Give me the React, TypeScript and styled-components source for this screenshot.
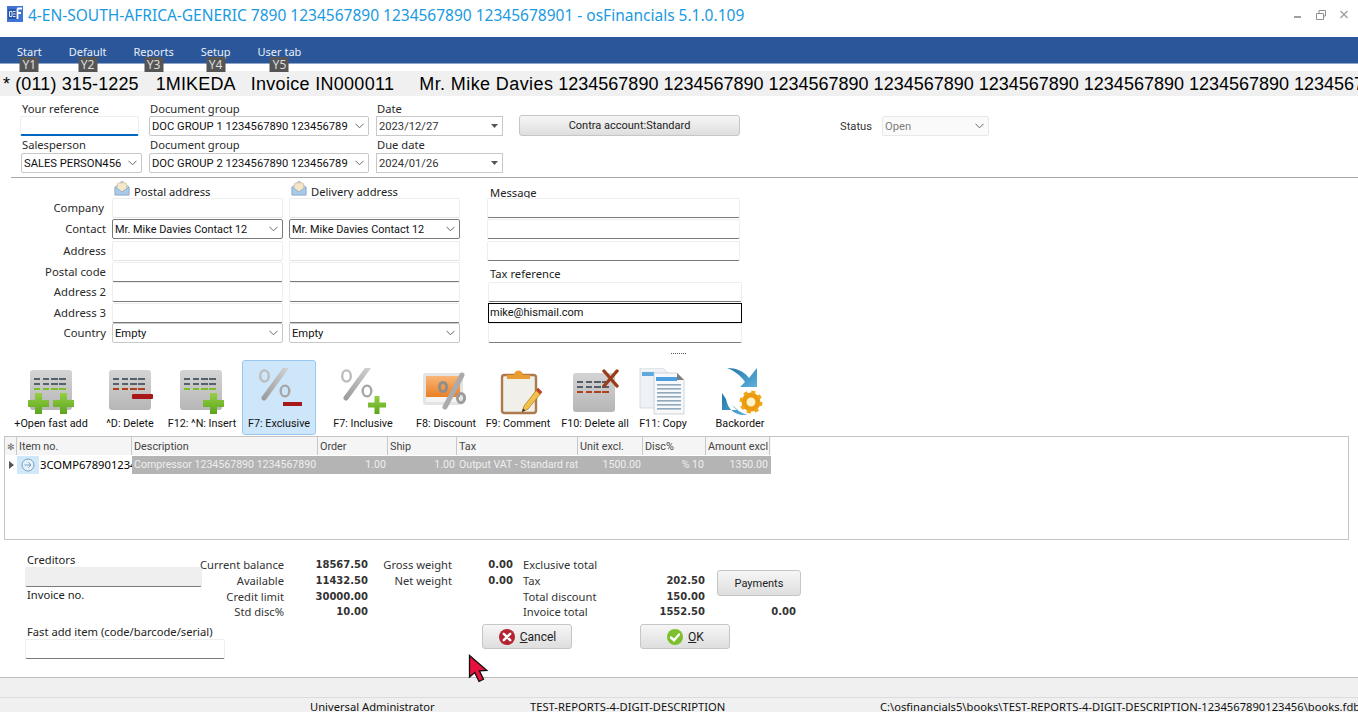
import React from "react";
import styled, { createGlobalStyle } from "styled-components";

const GlobalStyle = createGlobalStyle`
  html, body {
    margin: 0;
    padding: 0;
    background: #fff;
    overflow: hidden;
  }
  * { box-sizing: border-box; }
`;

const uiFont = `"Noto Sans", "Open Sans", sans-serif`;
const valueFont = `Roboto, "Noto Sans", sans-serif`;

const Page = styled.div`
  position: relative;
  width: 1358px;
  height: 712px;
  overflow: hidden;
  display: flex;
  flex-direction: column;
  font-family: ${uiFont};
  font-size: 12px;
  color: #222;
  background: #fff;
`;

const TitleBar = styled.div`
  height: 37px;
  flex: none;
  display: flex;
  align-items: flex-start;
  padding: 6px 10px 0 7px;
`;

const AppTitle = styled.div`
  margin-left: 5px;
  font-size: 15.5px;
  line-height: 18px;
  color: #1b9ae0;
  white-space: nowrap;
  flex: 1;
`;

const WindowButtons = styled.div`
  display: flex;
  align-items: center;
  gap: 14px;
  padding-top: 4px;
`;

const Ribbon = styled.div`
  height: 27px;
  flex: none;
  display: flex;
  gap: 27px;
  padding-left: 17px;
  background: #2b579a;
  border-bottom: 1px solid #8ea5c8;
`;

const Tab = styled.div`
  position: relative;
  color: #e9eef6;
  font-size: 11px;
  line-height: 30px;
  white-space: nowrap;
`;

const KeyTip = styled.span`
  position: absolute;
  top: 20px;
  left: 50%;
  transform: translateX(-50%);
  width: 19px;
  height: 15px;
  background: #555;
  color: #ddd;
  font-size: 12px;
  line-height: 15px;
  text-align: center;
`;

const InfoBand = styled.div`
  margin-top: 7px;
  height: 25px;
  flex: none;
  display: flex;
  background: #f0f0f0;
  font-family: "Liberation Sans", Arial, sans-serif;
  font-size: 18px;
  line-height: 26px;
  color: #000;
  white-space: pre;
  overflow: hidden;
  padding-left: 3px;
`;

const BandPart = styled.span<{ $gap?: number; $spacing?: number }>`
  flex: none;
  margin-left: ${(p) => p.$gap || 0}px;
  letter-spacing: ${(p) => p.$spacing || 0}px;
`;

const TopForm = styled.div`
  flex: none;
  display: grid;
  grid-template-columns: 121px 220px 127px 230px 1fr;
  grid-template-rows: 14px 20px 17px 19px;
  column-gap: 7px;
  padding: 6px 0 0 21px;
  height: 76px;
`;

const FieldLabel = styled.div<{ $lift?: boolean }>`
  padding-left: 1px;
  margin-bottom: ${(p) => (p.$lift ? "1px" : "0")};
  font-size: 11.2px;
  line-height: 14px;
  color: #2a2a2a;
  white-space: nowrap;
  align-self: end;
`;

const Field = styled.div<{ $flat?: boolean }>`
  height: 20px;
  background: #fff;
  border: 1px solid #eee;
  border-bottom: 1px solid ${(p) => (p.$flat ? "#e2e2e2" : "#7a7a7a")};
  border-radius: 2px;
`;

const ReferenceField = styled(Field)`
  width: 119px;
  margin-left: -1px;
  border-bottom: 2px solid #0067c0;
`;

const GreyField = styled(Field)`
  background: #efefef;
`;

const Combo = styled.div<{ $tone?: "dark" | "muted" }>`
  height: 20px;
  display: flex;
  align-items: center;
  background: ${(p) => (p.$tone === "muted" ? "#fafafa" : "#fff")};
  border: 1px solid ${(p) => (p.$tone === "dark" ? "#7a7a7a" : p.$tone === "muted" ? "#e8e8e8" : "#c8c8c8")};
  border-radius: 2px;
  padding: 0 4px 0 2px;
  font-family: ${valueFont};
  font-size: ${(p) => (p.$tone === "dark" ? "10.9px" : "11.2px")};
  color: ${(p) => (p.$tone === "muted" ? "#7d7d7d" : "#111")};
`;

const ComboText = styled.span`
  flex: 1;
  min-width: 0;
  margin-right: 7px;
  overflow: hidden;
  white-space: nowrap;
`;

const DateBox = styled(Combo)`
  border-radius: 0;
  padding-right: 4px;
  color: #333;
`;

const PushButton = styled.div`
  display: flex;
  align-items: center;
  justify-content: center;
  gap: 4px;
  border: 1px solid #c6c6c6;
  border-radius: 3px;
  background: linear-gradient(#f6f6f6, #dedede);
  font-family: ${valueFont};
  font-size: 11px;
  color: #222;
`;

const ContraButton = styled(PushButton)`
  margin-left: 9px;
  height: 21px;
  margin-top: -1px;
`;

const StatusWrap = styled.div`
  display: flex;
  align-items: center;
  padding-left: 93px;
`;

const StatusText = styled.span`
  flex: none;
  width: 42px;
  font-family: ${valueFont};
  font-size: 11.2px;
  color: #333;
`;

const StatusCombo = styled(Combo)`
  width: 107px;
  flex: none;
`;

const Divider = styled.div`
  flex: none;
  margin: 5px 0 0 11px;
  height: 1px;
  background: #a8a8a8;
`;

const AddressGrid = styled.div`
  flex: none;
  display: grid;
  grid-template-columns: 95px 171px 171px 276px;
  grid-template-rows: 20px 21px 22px 21px 20px 21px 20px 21px;
  column-gap: 6px;
  margin-left: 11px;
  height: 166px;
`;

const AddressHead = styled.div`
  display: flex;
  align-items: flex-end;
  gap: 4px;
  padding-left: 2px;
  font-size: 11.2px;
  line-height: 14px;
  white-space: nowrap;
  overflow: hidden;
`;

const EnvelopeSlot = styled.span`
  align-self: flex-start;
  margin-top: 2px;
  height: 16px;
`;

const HeadText = styled.span`
  margin-bottom: -1px;
`;

const RowLabel = styled.div<{ $inset?: number }>`
  padding-right: ${(p) => p.$inset || 0}px;
  text-align: right;
  font-size: 11.3px;
  line-height: 19px;
  color: #2a2a2a;
  white-space: nowrap;
`;

const MessageHead = styled.div`
  margin-left: 24px;
  align-self: end;
  font-size: 11.2px;
  line-height: 14px;
  margin-bottom: -2px;
`;

const MessageField = styled(Field)`
  margin: 0 2px 0 21px;
`;

const TaxLabel = styled(MessageHead)`
  margin-bottom: 0;
  padding-bottom: 1px;
`;

const TaxField = styled(Field)`
  margin: 0 0 0 22px;
`;

const EmailField = styled(TaxField)`
  border: 1px solid #000;
  border-radius: 0;
  padding-left: 1px;
  font-family: ${valueFont};
  font-size: 11px;
  line-height: 17px;
  color: #111;
`;

const SashRow = styled.div`
  flex: none;
  height: 16px;
  padding: 9px 0 0 671px;
`;

const SashDots = styled.div`
  width: 15px;
  border-top: 1px dotted #555;
`;

const Toolbar = styled.div`
  flex: none;
  height: 75px;
  display: flex;
  padding-left: 14px;
`;

const ToolButton = styled.div<{ $width: number; $offset?: number; $active?: boolean }>`
  width: ${(p) => p.$width}px;
  margin-left: ${(p) => p.$offset || 0}px;
  display: flex;
  flex-direction: column;
  align-items: center;
  padding-top: 7px;
  border: 1px solid ${(p) => (p.$active ? "#98c8f0" : "transparent")};
  border-radius: 3px;
  background: ${(p) => (p.$active ? "#cde6f9" : "transparent")};
  font-family: ${valueFont};
  font-size: 10.8px;
  line-height: 14px;
  white-space: nowrap;
  color: #111;
`;

const ToolIcon = styled.svg`
  width: 48px;
  height: 48px;
  flex: none;
  margin-bottom: 1px;
`;

const GridBox = styled.div`
  flex: none;
  margin: 1px 9px 0 4px;
  height: 104px;
  border: 1px solid #c4c4c4;
  overflow: hidden;
`;

const columns = "12px 115px 186px 70px 69px 121px 65px 63px 64px";

const GridHeader = styled.div`
  display: grid;
  grid-template-columns: ${columns};
  width: 766px;
  height: 18px;
  background: #f5f5f5;
`;

const HeadCell = styled.div`
  padding-left: 2px;
  border-right: 1px solid #c8c8c8;
  font-family: ${valueFont};
  font-size: 10.8px;
  line-height: 20px;
  color: #444;
  overflow: hidden;
  white-space: nowrap;
`;

const CornerCell = styled(HeadCell)`
  padding: 0;
  text-align: center;
  font-size: 9px;
  color: #666;
`;

const GridRow = styled.div`
  display: grid;
  grid-template-columns: ${columns};
  width: 766px;
  height: 18px;
  margin-top: 1px;
  background: #b4b4b4;
`;

const Cell = styled.div<{ $right?: boolean }>`
  padding: 0 ${(p) => (p.$right ? "2px" : "0")} 0 ${(p) => (p.$right ? "0" : "2px")};
  text-align: ${(p) => (p.$right ? "right" : "left")};
  font-family: ${valueFont};
  font-size: 10.6px;
  line-height: 18px;
  color: #efefef;
  overflow: hidden;
  white-space: nowrap;
`;

const RowMarker = styled.div`
  background: #fff;
  display: flex;
  align-items: center;
  justify-content: center;
`;

const MarkerArrow = styled.span`
  width: 0;
  height: 0;
  border-left: 5px solid #555;
  border-top: 4px solid transparent;
  border-bottom: 4px solid transparent;
`;

const ItemCell = styled.div`
  display: flex;
  background: #fff;
  overflow: hidden;
`;

const ItemIconWrap = styled.span`
  flex: none;
  width: 22px;
  display: flex;
  align-items: center;
  justify-content: center;
  background: #cfe9fb;
`;

const ItemCode = styled.span`
  padding-left: 1px;
  font-size: 11.2px;
  line-height: 18px;
  color: #000;
  white-space: nowrap;
`;

const BottomArea = styled.div`
  flex: 1;
  min-height: 0;
  display: flex;
`;

const LeftPane = styled.div`
  flex: none;
  width: 200px;
  padding: 13px 0 0 25px;
  display: flex;
  flex-direction: column;
`;

const PaneLabel = styled.div`
  padding-left: 2px;
  font-size: 11.2px;
  line-height: 14px;
  white-space: nowrap;
`;

const CreditorBox = styled(GreyField)`
  width: 177px;
  flex: none;
`;

const InvoiceLabel = styled(PaneLabel)`
  margin-top: 1px;
`;

const FastLabel = styled(PaneLabel)`
  margin-top: 23px;
`;

const FastBox = styled(Field)`
  width: 200px;
  flex: none;
`;

const RightPane = styled.div`
  flex: none;
  padding-top: 17px;
`;

const Totals = styled.div`
  display: grid;
  grid-template-columns: 84px 84px 84px 61px 10px 182px 91px;
  grid-template-rows: 16px 16px 16px 14px;
  align-items: center;
`;

const TotalLabel = styled.div<{ $left?: boolean }>`
  text-align: ${(p) => (p.$left ? "left" : "right")};
  font-size: 11.2px;
  line-height: 16px;
  white-space: nowrap;
  color: #333;
`;

const TotalValue = styled.div`
  text-align: right;
  font-family: "DejaVu Sans", Verdana, sans-serif;
  font-size: 10px;
  font-weight: 700;
  line-height: 16px;
  color: #333;
`;

const Spacer = styled.div``;

const SplitRow = styled.div`
  display: flex;
  justify-content: space-between;
  align-items: center;
`;

const PaymentsButton = styled(PushButton)`
  grid-column: 7;
  grid-row: 1 / 4;
  height: 26px;
  width: 84px;
  margin: 13px 0 0 12px;
  align-self: start;
`;

const GrandExtra = styled(TotalValue)`
  grid-column: 7;
  grid-row: 4;
`;

const ActionRow = styled.div`
  display: flex;
  gap: 68px;
  margin: 5px 0 0 282px;
`;

const ActionButton = styled(PushButton)`
  width: 90px;
  height: 25px;
  font-size: 12px;
`;

const StatusBar = styled.div`
  flex: none;
  height: 35px;
  background: #f0f0f0;
  border-top: 1px solid #bcbcbc;
`;

const StatusLine = styled.div`
  margin-top: 19px;
  height: 15px;
  border-top: 1px solid #dcdcdc;
  display: flex;
  font-size: 11.2px;
  line-height: 18px;
  color: #111;
  white-space: nowrap;
  overflow: hidden;
`;

const StatusPanel = styled.div<{ $left: number; $width?: number }>`
  flex: none;
  margin-left: ${(p) => p.$left}px;
  width: ${(p) => (p.$width ? `${p.$width}px` : "auto")};
  overflow: hidden;
`;

const Cursor = styled.svg`
  position: absolute;
  left: 468px;
  top: 654px;
  width: 21px;
  height: 29px;
`;

const Chevron = () => (
  <svg width="9" height="6" viewBox="0 0 9 6" style={{ flex: "none" }}>
    <path d="M0.5 0.8 L4.5 4.8 L8.5 0.8" fill="none" stroke="#666" strokeWidth="1" />
  </svg>
);

const Caret = () => (
  <svg width="7" height="4" viewBox="0 0 7 4" style={{ flex: "none" }}>
    <path d="M0 0 H7 L3.5 4 Z" fill="#555" />
  </svg>
);

const AppLogo = () => (
  <svg width="16" height="16" viewBox="0 0 16 16" style={{ flex: "none" }}>
    <rect width="16" height="16" fill="#3f73d6" />
    <rect x="1" y="3" width="9" height="10" fill="#2c56a8" />
    <path d="M2.5 5.5 H5 V10.5 H2.5 Z M6 5.5 H8.5 M6 8 H8.5 M6 10.5 H8.5" fill="none" stroke="#dfe8fa" strokeWidth="1" />
    <path d="M10.5 2.5 H15 M10.5 2.5 V13 M10.5 7 H14" fill="none" stroke="#fff" strokeWidth="1.8" />
  </svg>
);

const Envelope = () => (
  <svg width="16" height="16" viewBox="0 0 16 16">
    <path d="M1 7 L8 1 L15 7 V15 H1 Z" fill="#c4d9ee" stroke="#8eaac8" strokeWidth="0.7" />
    <path d="M3.5 3 H12.5 V9 L8 12 L3.5 9 Z" fill="#f4e6c8" stroke="#d8b98c" strokeWidth="0.5" />
    <path d="M1 7 L8 12 L15 7 V15 H1 Z" fill="#a9cbe9" stroke="#7f9fc4" strokeWidth="0.6" />
  </svg>
);

const Defs = () => (
  <svg width="0" height="0" style={{ position: "absolute" }}>
    <defs>
      <linearGradient id="card" x1="0" y1="0" x2="0" y2="1">
        <stop offset="0" stopColor="#d4d4d4" />
        <stop offset="1" stopColor="#b6b6b6" />
      </linearGradient>
      <linearGradient id="green" x1="0" y1="0" x2="0" y2="1">
        <stop offset="0" stopColor="#96cf45" />
        <stop offset="1" stopColor="#5aa51c" />
      </linearGradient>
      <linearGradient id="slash" x1="1" y1="0" x2="0" y2="1">
        <stop offset="0" stopColor="#cfcfcf" />
        <stop offset="1" stopColor="#9d9d9d" />
      </linearGradient>
      <linearGradient id="orange" x1="0" y1="0" x2="0" y2="1">
        <stop offset="0" stopColor="#f8b678" />
        <stop offset="1" stopColor="#ea7f22" />
      </linearGradient>
      <linearGradient id="blueArrow" x1="0" y1="0" x2="1" y2="1">
        <stop offset="0" stopColor="#1f76a8" />
        <stop offset="1" stopColor="#5fb0dc" />
      </linearGradient>
    </defs>
  </svg>
);

const CardBase = ({ x = 3, y = 2, h = 40, low = "#7cbf2a" }: { x?: number; y?: number; h?: number; low?: string }) => (
  <g>
    <rect x={x} y={y} width="42" height={h} rx="3" fill="url(#card)" />
    {[8, 13, 18].map((dy, i) => (
      <g key={dy} fill={i === 2 ? low : "#566068"}>
        <rect x={x + 4} y={y + dy} width="6" height="2" />
        <rect x={x + 13} y={y + dy} width="6" height="2" />
        <rect x={x + 21} y={y + dy} width="7" height="2" />
        <rect x={x + 29} y={y + dy} width="7" height="2" />
      </g>
    ))}
  </g>
);

const Plus = ({ x, y, size = 21, bar = 7 }: { x: number; y: number; size?: number; bar?: number }) => {
  const arm = (size - bar) / 2;
  return (
    <path
      d={`M${x + arm} ${y} h${bar} v${arm} h${arm} v${bar} h-${arm} v${arm} h-${bar} v-${arm} h-${arm} v-${bar} h${arm} Z`}
      fill="url(#green)"
    />
  );
};

const Percent = ({ dx = 0 }: { dx?: number }) => (
  <g transform={`translate(${dx} 0)`}>
    <ellipse cx="8.5" cy="8" rx="4.3" ry="5.6" fill="none" stroke="#bdbdbd" strokeWidth="2.4" />
    <path d="M30 0 L8 30" stroke="url(#slash)" strokeWidth="5" strokeLinecap="round" />
    <ellipse cx="29" cy="23" rx="4.3" ry="5.4" fill="none" stroke="#a6a6a6" strokeWidth="2.4" />
  </g>
);

const iconArt: Record<string, React.ReactNode> = {
  fastAdd: (
    <>
      <CardBase />
      <Plus x={1} y={25} />
      <Plus x={26} y={25} />
    </>
  ),
  remove: (
    <>
      <CardBase low="#b0401c" />
      <rect x="26" y="26" width="21" height="5" rx="1" fill="#a81818" />
    </>
  ),
  insert: (
    <>
      <CardBase x={2} />
      <Plus x={25} y={25} />
    </>
  ),
  exclusive: (
    <>
      <Percent dx={1} />
      <rect x="28" y="34" width="19" height="4" fill="#a81818" />
    </>
  ),
  inclusive: (
    <>
      <Percent dx={-1} />
      <Plus x={29} y={28} size={18} bar={5} />
    </>
  ),
  discount: (
    <>
      <rect x="1" y="5" width="40" height="32" rx="3" fill="#e4e4e4" />
      <rect x="4" y="8" width="34" height="21" fill="url(#orange)" />
      <rect x="4" y="29" width="34" height="5" fill="#f4f4f4" />
      <ellipse cx="21" cy="19" rx="3.6" ry="4.6" fill="none" stroke="#8e8e8e" strokeWidth="3" />
      <path d="M40 7 L23 39" stroke="#ababab" strokeWidth="5" strokeLinecap="round" />
      <ellipse cx="39" cy="30" rx="3.6" ry="4.6" fill="none" stroke="#9d9d9d" strokeWidth="3" />
    </>
  ),
  comment: (
    <>
      <rect x="8" y="7" width="34" height="38" rx="2.5" fill="#f1efe9" stroke="#ac7a4c" strokeWidth="2.4" />
      <path d="M13 11 V7 H20 C20 1 29 1 29 7 H36 V11 Z" fill="#e99c32" />
      <path d="M44 20 L30 38 L28 44 L34 41 L48 24 Z" fill="#f2c14a" stroke="#a9792a" strokeWidth="0.7" />
      <path d="M44 20 L48 24 L46 26.5 L42 22.5 Z" fill="#c8402a" />
      <path d="M28 44 L29 40.5 L31.5 42.5 Z" fill="#333" />
    </>
  ),
  deleteAll: (
    <>
      <CardBase x={2} y={5} h={39} low="#b0401c" />
      <path d="M33 3 L46 18 M46 3 L33 18" stroke="#9a3c1a" strokeWidth="3.4" strokeLinecap="round" />
    </>
  ),
  copy: (
    <>
      <path d="M1 0 H24 L30 6 V40 H1 Z" fill="#eef1f5" stroke="#cfd4da" strokeWidth="0.8" />
      <rect x="3" y="4" width="12" height="4" fill="#5fa8dd" />
      <path d="M15 5 H38 L45 12 V46 H15 Z" fill="#f6f8fa" stroke="#c4cad0" strokeWidth="0.8" />
      <path d="M38 5 L45 12 H38 Z" fill="#7d7d7d" />
      <rect x="17" y="9" width="21" height="4" fill="#4d9fe0" />
      {[16, 20, 24, 28, 32, 36, 40].map((y) => (
        <rect key={y} x="18" y={y} width="24" height="1.6" fill="#8fa9bd" />
      ))}
    </>
  ),
  backorder: (
    <>
      <path d="M11 0 C20 0 28 3 33 10 L41 0 V19 H24 L29 14 C25 8 19 3 11 0 Z" fill="url(#blueArrow)" />
      <path d="M6 25 V42 H22 L16 37 C19 41 25 45 32 47 C21 48 12 43 10 31 Z" fill="url(#blueArrow)" />
      <circle cx="35" cy="34" r="7" fill="#fff3c8" stroke="#eb9a12" strokeWidth="5" />
      <circle cx="35" cy="34" r="10" fill="none" stroke="#f0a818" strokeWidth="3" strokeDasharray="4 3.85" />
    </>
  ),
};

const tools = [
  { key: "fastAdd", label: "+Open fast add", width: 74 },
  { key: "remove", label: "^D: Delete", width: 64, offset: 10 },
  { key: "insert", label: "F12: ^N: Insert", width: 80 },
  { key: "exclusive", label: "F7: Exclusive", width: 74, active: true },
  { key: "inclusive", label: "F7: Inclusive", width: 94 },
  { key: "discount", label: "F8: Discount", width: 72 },
  { key: "comment", label: "F9: Comment", width: 72 },
  { key: "deleteAll", label: "F10: Delete all", width: 82 },
  { key: "copy", label: "F11: Copy", width: 54 },
  { key: "backorder", label: "Backorder", width: 100 },
];

const ribbonTabs = [
  ["Start", "Y1"],
  ["Default", "Y2"],
  ["Reports", "Y3"],
  ["Setup", "Y4"],
  ["User tab", "Y5"],
];

const gridHeads = ["Item no.", "Description", "Order", "Ship", "Tax", "Unit excl.", "Disc%", "Amount excl"];

const contact = "Mr. Mike Davies Contact 12";

function TotalsSplit({ label, value }: { label: string; value: string }) {
  return (
    <SplitRow>
      <TotalLabel $left>{label}</TotalLabel>
      <TotalValue>{value}</TotalValue>
    </SplitRow>
  );
}

export default function App() {
  return (
    <Page>
      <GlobalStyle />
      <Defs />
      <TitleBar>
        <AppLogo />
        <AppTitle>4-EN-SOUTH-AFRICA-GENERIC 7890 1234567890 1234567890 12345678901 - osFinancials 5.1.0.109</AppTitle>
        <WindowButtons>
          <svg width="54" height="10" viewBox="0 0 54 10">
            <rect x="0" y="6" width="7" height="2" fill="#a0a0a0" />
            <path d="M22.5 3.5 H29.5 V9.5 H22.5 Z M25 3 V0.5 H31.5 V6 H30" fill="none" stroke="#8f8f8f" />
            <path d="M46.5 1 L53.5 8 M53.5 1 L46.5 8" stroke="#a0a0a0" strokeWidth="1.4" />
          </svg>
        </WindowButtons>
      </TitleBar>

      <Ribbon>
        {ribbonTabs.map(([name, tip]) => (
          <Tab key={name}>
            {name}
            <KeyTip>{tip}</KeyTip>
          </Tab>
        ))}
      </Ribbon>

      <InfoBand>
        <BandPart $spacing={0.12}>* (011) 315-1225</BandPart>
        <BandPart $gap={17} $spacing={0.14}>1MIKEDA</BandPart>
        <BandPart $gap={15} $spacing={0.3}>Invoice IN000011</BandPart>
        <BandPart $gap={25} $spacing={0.4}>Mr. Mike Davies</BandPart>
        <BandPart $gap={5}>1234567890 1234567890 1234567890 1234567890 1234567890 1234567890 1234567890 1234567890</BandPart>
      </InfoBand>

      <TopForm>
        <FieldLabel>Your reference</FieldLabel>
        <FieldLabel>Document group</FieldLabel>
        <FieldLabel>Date</FieldLabel>
        <div />
        <div />

        <ReferenceField />
        <Combo>
          <ComboText>DOC GROUP 1 1234567890 1234567890</ComboText>
          <Chevron />
        </Combo>
        <DateBox>
          <ComboText>2023/12/27</ComboText>
          <Caret />
        </DateBox>
        <ContraButton>Contra account:Standard</ContraButton>
        <StatusWrap>
          <StatusText>Status</StatusText>
          <StatusCombo $tone="muted">
            <ComboText>Open</ComboText>
            <Chevron />
          </StatusCombo>
        </StatusWrap>

        <FieldLabel $lift>Salesperson</FieldLabel>
        <FieldLabel $lift>Document group</FieldLabel>
        <FieldLabel $lift>Due date</FieldLabel>
        <div />
        <div />

        <Combo>
          <ComboText>SALES PERSON4567890</ComboText>
          <Chevron />
        </Combo>
        <Combo>
          <ComboText>DOC GROUP 2 1234567890 1234567890</ComboText>
          <Chevron />
        </Combo>
        <DateBox>
          <ComboText>2024/01/26</ComboText>
          <Caret />
        </DateBox>
      </TopForm>

      <Divider />

      <AddressGrid>
        <div />
        <AddressHead>
          <EnvelopeSlot>
            <Envelope />
          </EnvelopeSlot>
          <HeadText>Postal address</HeadText>
        </AddressHead>
        <AddressHead>
          <EnvelopeSlot>
            <Envelope />
          </EnvelopeSlot>
          <HeadText>Delivery address</HeadText>
        </AddressHead>
        <MessageHead>Message</MessageHead>

        <RowLabel $inset={2}>Company</RowLabel>
        <Field $flat />
        <Field $flat />
        <MessageField />

        <RowLabel>Contact</RowLabel>
        <Combo $tone="dark">
          <ComboText>{contact}</ComboText>
          <Chevron />
        </Combo>
        <Combo $tone="dark">
          <ComboText>{contact}</ComboText>
          <Chevron />
        </Combo>
        <MessageField />

        <RowLabel>Address</RowLabel>
        <Field $flat />
        <Field $flat />
        <MessageField />

        <RowLabel>Postal code</RowLabel>
        <Field />
        <Field />
        <TaxLabel>Tax reference</TaxLabel>

        <RowLabel>Address 2</RowLabel>
        <Field />
        <Field />
        <TaxField />

        <RowLabel>Address 3</RowLabel>
        <Field />
        <Field />
        <EmailField>mike@hismail.com</EmailField>

        <RowLabel>Country</RowLabel>
        <Combo>
          <ComboText>Empty</ComboText>
          <Chevron />
        </Combo>
        <Combo>
          <ComboText>Empty</ComboText>
          <Chevron />
        </Combo>
        <TaxField />
      </AddressGrid>

      <SashRow>
        <SashDots />
      </SashRow>

      <Toolbar>
        {tools.map((t) => (
          <ToolButton key={t.key} $width={t.width} $offset={t.offset} $active={t.active}>
            <ToolIcon viewBox="0 0 48 48">{iconArt[t.key]}</ToolIcon>
            {t.label}
          </ToolButton>
        ))}
      </Toolbar>

      <GridBox>
        <GridHeader>
          <CornerCell>✻</CornerCell>
          {gridHeads.map((h) => (
            <HeadCell key={h}>{h}</HeadCell>
          ))}
        </GridHeader>
        <GridRow>
          <RowMarker>
            <MarkerArrow />
          </RowMarker>
          <ItemCell>
            <ItemIconWrap>
              <svg width="14" height="14" viewBox="0 0 14 14">
                <circle cx="7" cy="7" r="6" fill="#e3f1fb" stroke="#7f9db8" />
                <path d="M3.5 7 H10 M7.5 4.5 L10 7 L7.5 9.5" fill="none" stroke="#7f9db8" />
              </svg>
            </ItemIconWrap>
            <ItemCode>3COMP67890123456</ItemCode>
          </ItemCell>
          <Cell>Compressor 1234567890 1234567890</Cell>
          <Cell $right>1.00</Cell>
          <Cell $right>1.00</Cell>
          <Cell>Output VAT - Standard rate</Cell>
          <Cell $right>1500.00</Cell>
          <Cell $right>% 10</Cell>
          <Cell $right>1350.00</Cell>
        </GridRow>
      </GridBox>

      <BottomArea>
        <LeftPane>
          <PaneLabel>Creditors</PaneLabel>
          <CreditorBox />
          <InvoiceLabel>Invoice no.</InvoiceLabel>
          <FastLabel>Fast add item (code/barcode/serial)</FastLabel>
          <FastBox />
        </LeftPane>
        <RightPane>
          <Totals>
            <TotalLabel>Current balance</TotalLabel>
            <TotalValue>18567.50</TotalValue>
            <TotalLabel>Gross weight</TotalLabel>
            <TotalValue>0.00</TotalValue>
            <Spacer />
            <TotalLabel $left>Exclusive total</TotalLabel>
            <PaymentsButton>Payments</PaymentsButton>

            <TotalLabel>Available</TotalLabel>
            <TotalValue>11432.50</TotalValue>
            <TotalLabel>Net weight</TotalLabel>
            <TotalValue>0.00</TotalValue>
            <Spacer />
            <TotalsSplit label="Tax" value="202.50" />

            <TotalLabel>Credit limit</TotalLabel>
            <TotalValue>30000.00</TotalValue>
            <Spacer />
            <Spacer />
            <Spacer />
            <TotalsSplit label="Total discount" value="150.00" />

            <TotalLabel>Std disc%</TotalLabel>
            <TotalValue>10.00</TotalValue>
            <Spacer />
            <Spacer />
            <Spacer />
            <TotalsSplit label="Invoice total" value="1552.50" />
            <GrandExtra>0.00</GrandExtra>
          </Totals>
          <ActionRow>
            <ActionButton>
              <svg width="18" height="18" viewBox="0 0 18 18">
                <circle cx="9" cy="9" r="8" fill="#b4232f" />
                <path d="M5.8 5.8 L12.2 12.2 M12.2 5.8 L5.8 12.2" stroke="#fff" strokeWidth="2.4" strokeLinecap="round" />
              </svg>
              <span>
                <u>C</u>ancel
              </span>
            </ActionButton>
            <ActionButton>
              <svg width="18" height="18" viewBox="0 0 18 18">
                <circle cx="9" cy="9" r="8" fill="#7cc030" />
                <path d="M5 9.5 L8 12.2 L13 6.5" fill="none" stroke="#fff" strokeWidth="2.4" strokeLinecap="round" />
              </svg>
              <span>
                <u>O</u>K
              </span>
            </ActionButton>
          </ActionRow>
        </RightPane>
      </BottomArea>

      <StatusBar>
        <StatusLine>
          <StatusPanel $left={310} $width={220}>Universal Administrator</StatusPanel>
          <StatusPanel $left={0} $width={195}>TEST-REPORTS-4-DIGIT-DESCRIPTION-1234567890</StatusPanel>
          <StatusPanel $left={155}>C:\osfinancials5\books\TEST-REPORTS-4-DIGIT-DESCRIPTION-1234567890123456\books.fdb</StatusPanel>
        </StatusLine>
      </StatusBar>

      <Cursor viewBox="0 0 21 29">
        <path d="M1.5 1.5 L1.5 23 L6.8 18.6 L11 27.5 L15.5 25.3 L11.4 16.8 L18.8 16.5 Z" fill="#e8103c" stroke="#111" strokeWidth="1.3" />
      </Cursor>
    </Page>
  );
}
